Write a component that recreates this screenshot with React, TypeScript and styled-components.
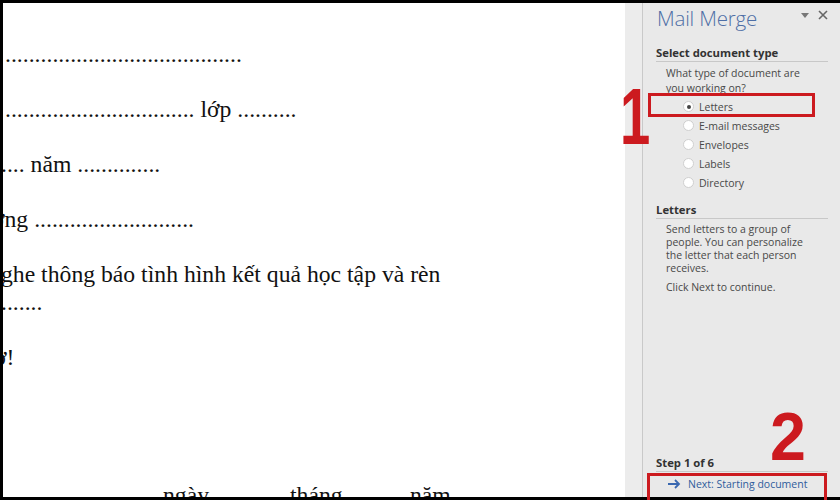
import React from "react";
import styled, {createGlobalStyle} from "styled-components";

const GlobalStyle = createGlobalStyle`
  html, body {
    margin: 0;
    padding: 0;
    background: #000;
  }
`;

const Frame = styled.div`
  position: relative;
  width: 840px;
  height: 500px;
  box-sizing: border-box;
  padding: 3px 0 3px 3px;
  background: #000;
  display: flex;
  overflow: hidden;
`;

const Document = styled.div`
  flex: 1;
  background: #fff;
  overflow: hidden;
  padding-top: 37px;
  font-family: "Liberation Serif", "Times New Roman", serif;
  font-size: 23.7px;
  line-height: 28px;
  color: #111;
`;

const Para = styled.p<{ shift?: number }>`
  margin: 0 0 27px ${({shift}) => shift || 2}px;
  white-space: nowrap;
`;

const WrapLine = styled.span`
  display: block;
`;

const DateLine = styled.p`
  margin: 110px 0 0 160px;
  display: flex;
  white-space: nowrap;
`;

const DateWord = styled.span<{ w?: number }>`
  width: ${({w}) => w ? `${w}px` : 'auto'};
`;

const Gutter = styled.div`
  width: 17px;
  background: #ececec;
  border-right: 1px solid #c9c9c9;
`;

const Panel = styled.div`
  width: 197px;
  background: #e9e9e9;
  display: flex;
  flex-direction: column;
  padding: 0 12px 0 13px;
  box-sizing: border-box;
  font-family: "Open Sans", "Noto Sans", sans-serif;
  font-size: 10.5px;
  color: #484848;
`;

const Header = styled.div`
  display: flex;
  align-items: center;
  justify-content: space-between;
  height: 30px;
  padding-left: 1px;
`;

const Title = styled.div`
  font-size: 20.5px;
  font-weight: 300;
  color: #4e6fa6;
  letter-spacing: -0.2px;
`;

const HeaderIcons = styled.div`
  display: flex;
  align-items: center;
  gap: 9px;
  margin-top: -6px;
`;

const SectionHead = styled.div<{ top: number }>`
  margin-top: ${({top}) => top}px;
  font-weight: 700;
  font-size: 11.3px;
  color: #333;
  padding-bottom: 1px;
  border-bottom: 1px solid #c8c8c8;
`;

const Body = styled.div<{ lh: number }>`
  padding: 4px 0 0 10px;
  line-height: ${({lh}) => lh}px;
`;

const Spacer = styled.div`
  height: 6px;
`;

const RadioList = styled.div`
  display: flex;
  flex-direction: column;
  padding: 1px 0 0 27px;
`;

const RadioRow = styled.div`
  display: flex;
  align-items: center;
  height: 19px;
  gap: 5px;
`;

const Circle = styled.span<{ checked?: boolean }>`
  width: 11px;
  height: 11px;
  border-radius: 50%;
  box-sizing: border-box;
  background: #fff;
  border: 1px solid #cfcfcf;
  display: flex;
  align-items: center;
  justify-content: center;

  &::after {
    content: "";
    width: 4px;
    height: 4px;
    border-radius: 50%;
    background: ${({checked}) => checked ? '#444' : 'transparent'};
  }
`;

const Footer = styled.div`
  margin-top: auto;
  padding-bottom: 6px;
`;

const NextLink = styled.div`
  display: flex;
  align-items: center;
  gap: 7px;
  padding: 5px 0 0 12px;
  color: #2f5c9c;
`;

const BigNumber = styled.div<{ left: number; top: number; size: number; sx: number }>`
  position: absolute;
  left: ${({left}) => left}px;
  top: ${({top}) => top}px;
  font-family: "Liberation Sans", Arial, sans-serif;
  font-weight: 700;
  font-size: ${({size}) => size}px;
  line-height: 1;
  color: #cc1a1f;
  transform: scaleX(${({sx}) => sx});
  transform-origin: left top;
`;

const RedBox = styled.div<{ left: number; top: number; w: number; h: number }>`
  position: absolute;
  left: ${({left}) => left}px;
  top: ${({top}) => top}px;
  width: ${({w}) => w}px;
  height: ${({h}) => h}px;
  box-sizing: border-box;
  border: 3px solid #cc1a1f;
`;

const types = ["Letters", "E-mail messages", "Envelopes", "Labels", "Directory"];

const App: React.FC = () => {
    return (
        <>
            <GlobalStyle/>
            <Frame>
                <Document>
                    <Para>........................................</Para>
                    <Para>................................ lớp ..........</Para>
                    <Para shift={-2}>.... năm ..............</Para>
                    <Para shift={-11}>ờng ...........................</Para>
                    <Para shift={-2}>
                        <WrapLine>ghe thông báo tình hình kết quả học tập và rèn</WrapLine>
                        <WrapLine>.......</WrapLine>
                    </Para>
                    <Para shift={-9}>ờ!</Para>
                    <DateLine>
                        <DateWord w={127}>ngày</DateWord>
                        <DateWord w={120}>tháng</DateWord>
                        <DateWord>năm</DateWord>
                    </DateLine>
                </Document>
                <Gutter/>
                <Panel>
                    <Header>
                        <Title>Mail Merge</Title>
                        <HeaderIcons>
                            <svg width="8" height="5" viewBox="0 0 8 5"><path d="M0 0h8L4 5z" fill="#777"/></svg>
                            <svg width="10" height="10" viewBox="0 0 10 10"><path d="M1 1l8 8M9 1l-8 8" stroke="#666" strokeWidth="1.6"/></svg>
                        </HeaderIcons>
                    </Header>
                    <SectionHead top={12}>Select document type</SectionHead>
                    <Body lh={15}>What type of document are<br/>you working on?</Body>
                    <RadioList>
                        {types.map((t, i) => (
                            <RadioRow key={t}>
                                <Circle checked={i === 0}/>
                                <span>{t}</span>
                            </RadioRow>
                        ))}
                    </RadioList>
                    <SectionHead top={10}>Letters</SectionHead>
                    <Body lh={13}>
                        Send letters to a group of<br/>
                        people. You can personalize<br/>
                        the letter that each person<br/>
                        receives.
                        <Spacer/>
                        Click Next to continue.
                    </Body>
                    <Footer>
                        <SectionHead top={0}>Step 1 of 6</SectionHead>
                        <NextLink>
                            <svg width="13" height="10" viewBox="0 0 13 10"><path d="M0 5h11M7 1l4 4-4 4" stroke="#3a68b0" strokeWidth="1.8" fill="none"/></svg>
                            <span>Next: Starting document</span>
                        </NextLink>
                    </Footer>
                </Panel>
                <BigNumber left={620} top={77} size={80} sx={0.68}>1</BigNumber>
                <BigNumber left={770} top={402} size={68} sx={0.95}>2</BigNumber>
                <RedBox left={648} top={93} w={167} h={24}/>
                <RedBox left={647} top={473} w={180} h={30}/>
            </Frame>
        </>
    );
};

export default App;
